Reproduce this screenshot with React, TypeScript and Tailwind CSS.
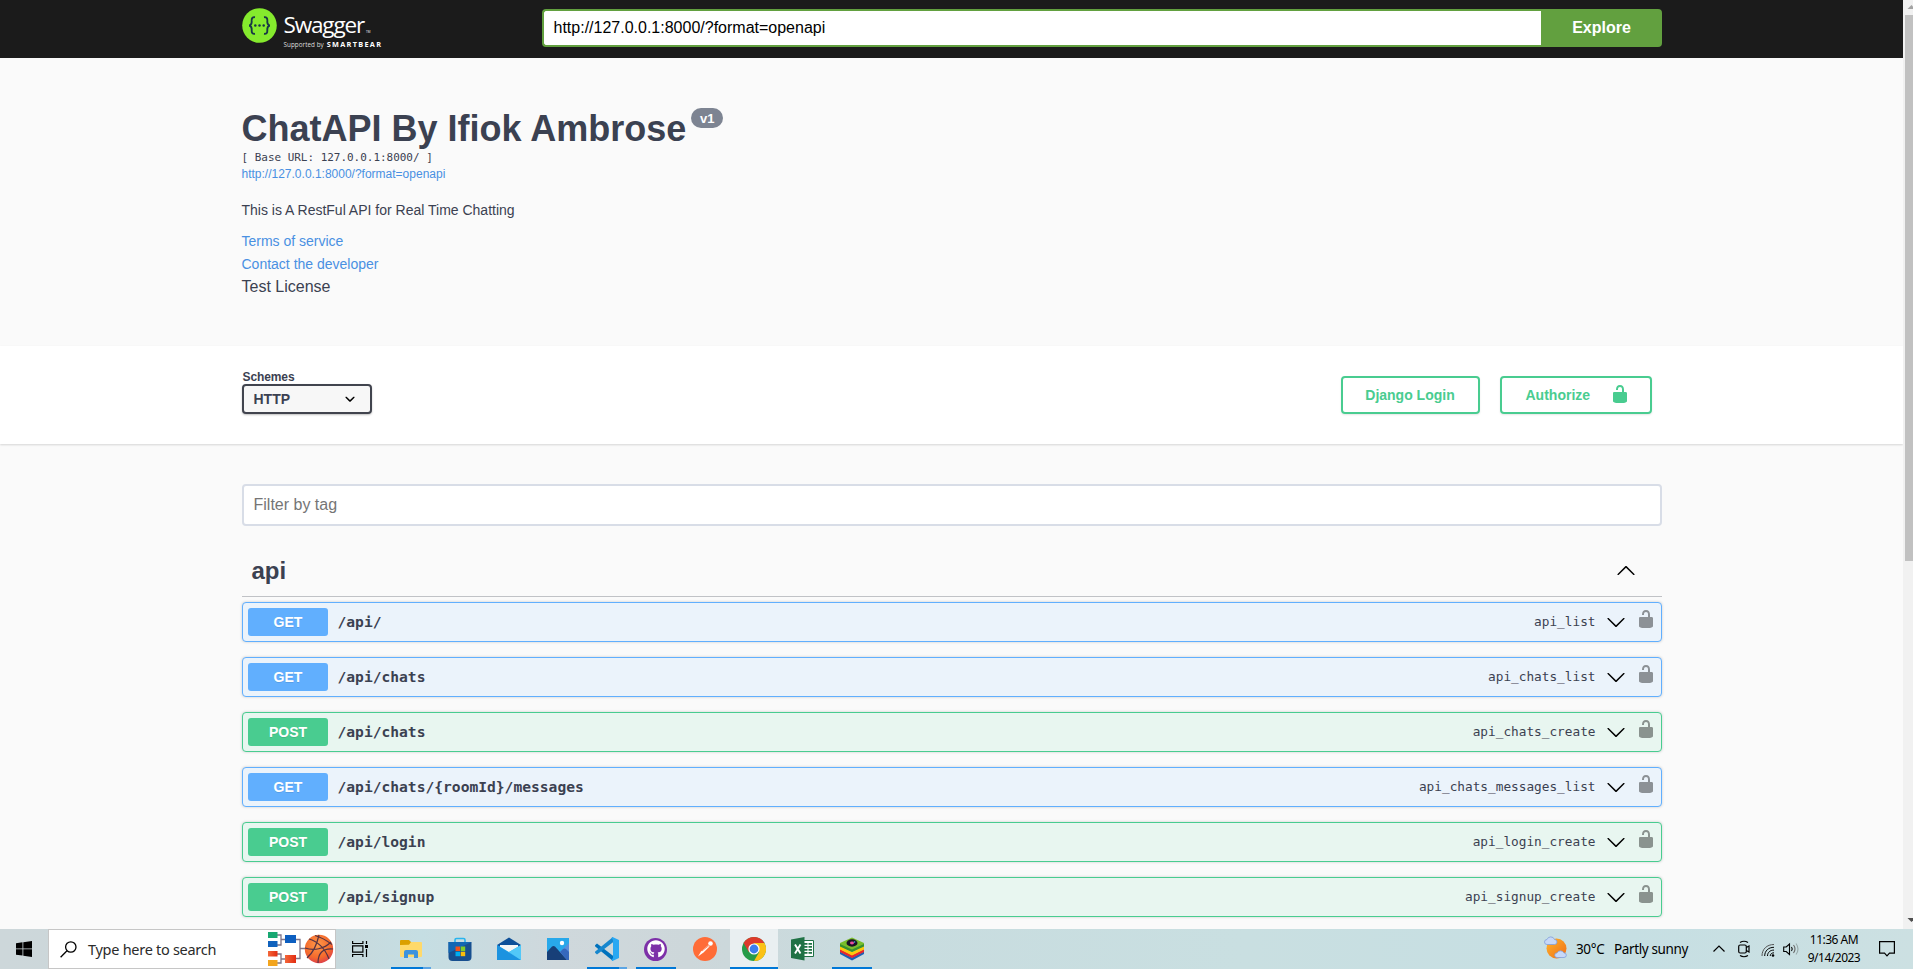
import React from "react";
import { FaGithub } from "react-icons/fa";

type Method = "GET" | "POST";
type Operation = { method: Method; path: string; id: string };

const operations: Operation[] = [
  { method: "GET", path: "/api/", id: "api_list" },
  { method: "GET", path: "/api/chats", id: "api_chats_list" },
  { method: "POST", path: "/api/chats", id: "api_chats_create" },
  { method: "GET", path: "/api/chats/{roomId}/messages", id: "api_chats_messages_list" },
  { method: "POST", path: "/api/login", id: "api_login_create" },
  { method: "POST", path: "/api/signup", id: "api_signup_create" },
];

function Wrapper({ children, className = "" }: { children: React.ReactNode; className?: string }) {
  return <div className={`mx-auto w-full max-w-[1460px] px-5 ${className}`}>{children}</div>;
}

function UnlockIcon({ className = "" }: { className?: string }) {
  return (
    <svg viewBox="0 0 20 20" className={`h-5 w-5 shrink-0 fill-current ${className}`}>
      <path d="M15.8 8H14V5.6C14 2.703 12.665 1 10 1 7.334 1 6 2.703 6 5.6V6h2v-.801C8 3.754 8.797 3 10 3c1.203 0 2 .754 2 2.199V8H4c-.553 0-1 .646-1 1.199V17c0 .549.428 1.139.951 1.307l1.197.387C5.672 18.861 6.55 19 7.1 19h5.8c.549 0 1.428-.139 1.951-.307l1.196-.387c.524-.167.953-.757.953-1.306V9.199C17 8.646 16.352 8 15.8 8z" />
    </svg>
  );
}

function ArrowDown() {
  return (
    <svg viewBox="0 0 20 20" className="h-5 w-5 shrink-0">
      <path d="M17.418 6.109c.272-.268.709-.268.979 0s.271.701 0 .969l-7.908 7.83c-.27.268-.707.268-.979 0l-7.908-7.83c-.27-.268-.27-.701 0-.969.271-.268.709-.268.979 0L10 13.25l7.418-7.141z" />
    </svg>
  );
}

function ArrowUp() {
  return (
    <svg viewBox="0 0 20 20" className="mb-[3px] h-5 w-5 shrink-0">
      <path d="M17.418 14.908c.272.268.709.268.979 0s.271-.701 0-.969l-7.908-7.831c-.27-.268-.707-.268-.979 0l-7.908 7.831c-.27.268-.27.701 0 .969.271.268.709.268.979 0L10 7.767l7.418 7.141z" />
    </svg>
  );
}

function SwaggerLogo() {
  return (
    <div className="flex w-[300px] items-start pt-2">
      <svg viewBox="0 0 35 35" className="h-[35px] w-[35px] shrink-0">
        <circle cx="17.5" cy="17.5" r="17.3" fill="#85ea2d" />
        <g fill="none" stroke="#173647" strokeWidth="1.9">
          <path d="M13 9.2c-2.6-.3-3.4.8-3.3 3.2.2 2.900-.2 4.600-2.500 5.100 2.300.5 2.700 2.200 2.500 5.100-.1 2.400.7 3.500 3.300 3.200" />
          <path d="M22 9.200c2.600-.3 3.400.8 3.300 3.200-.2 2.900.2 4.600 2.500 5.100-2.300.5-2.700 2.200-2.500 5.100.1 2.400-.7 3.500-3.300 3.200" />
        </g>
        <g fill="#173647">
          <circle cx="13.300" cy="17.500" r="1.250" />
          <circle cx="17.500" cy="17.500" r="1.250" />
          <circle cx="21.700" cy="17.500" r="1.250" />
        </g>
      </svg>
      <div className="ml-[7px] font-['Open_Sans',sans-serif] text-white">
        <div className="flex h-[30px] items-start pt-[3px]">
          <span className="text-[22.5px] leading-[28px] tracking-[-1.15px]">Swagger</span>
          <span className="mt-[19px] ml-[2px] text-[3px] leading-[4px]">TM</span>
        </div>
        <div className="flex items-baseline gap-[3px] leading-[12px]">
          <span className="text-[6.3px] tracking-[0.05px] text-[#dddddd]">Supported by</span>
          <span className="text-[7.3px] font-bold tracking-[1.3px]">SMARTBEAR</span>
        </div>
      </div>
    </div>
  );
}

function TopBar() {
  return (
    <header className="h-[58px] shrink-0 bg-[#1b1b1b]">
      <Wrapper className="flex">
        <SwaggerLogo />
        <div className="mt-[9px] flex h-[38px] flex-1">
          <div className="flex flex-1 items-center rounded-l border-2 border-r-0 border-[#62a03f] bg-white px-[10px] text-base text-black">
            http://127.0.0.1:8000/?format=openapi
          </div>
          <button className="w-[121px] rounded-r bg-[#62a03f] pl-px text-base font-bold text-white">Explore</button>
        </div>
      </Wrapper>
    </header>
  );
}

function Info() {
  return (
    <section className="h-[288px] shrink-0">
      <Wrapper className="pt-[50px]">
        <h2 className="flex items-start text-[36px] leading-[41px] font-bold">
          ChatAPI By Ifiok Ambrose
          <span className="ml-[5px] flex h-5 w-8 items-center justify-center rounded-full bg-[#7d8492] text-[13px] leading-none text-white">
            v1
          </span>
        </h2>
        <div className="pt-px font-['DejaVu_Sans_Mono',monospace] text-[10.96px] leading-[16px]">[ Base URL: 127.0.0.1:8000/ ]</div>
        <a className="block text-xs leading-[16px] text-[#4990e2]">http://127.0.0.1:8000/?format=openapi</a>
        <p className="mt-[18px] text-sm leading-[21px]">This is A RestFul API for Real Time Chatting</p>
        <a className="mt-[10px] block text-sm leading-[21px] text-[#4990e2]">Terms of service</a>
        <a className="mt-[2px] block text-sm leading-[21px] text-[#4990e2]">Contact the developer</a>
        <div className="mt-px text-base leading-[22px]">Test License</div>
      </Wrapper>
    </section>
  );
}

function Schemes() {
  return (
    <section className="h-[98px] shrink-0 bg-white shadow-[0_1px_2px_0_rgba(0,0,0,0.15)]">
      <Wrapper className="flex items-start justify-between pt-[24px]">
        <label className="text-xs leading-[14px] font-bold">
          <span className="block pl-px tracking-[-0.1px]">Schemes</span>
          <span className="flex h-[30px] w-[130px] items-center justify-between rounded border-2 border-[#41444e] bg-[#f7f7f7] pr-[10px] pl-[10px] text-sm leading-none shadow-[0_1px_2px_0_rgba(0,0,0,0.25)]">
            HTTP
            <svg viewBox="0 0 20 20" className="h-5 w-5">
              <path d="M13.418 7.859c.271-.268.709-.268.978 0 .27.268.272.701 0 .969l-3.908 3.83c-.27.268-.707.268-.979 0l-3.908-3.830c-.27-.267-.27-.701 0-.969.271-.268.709-.268.978 0L10 11l3.418-3.141z" />
            </svg>
          </span>
        </label>
        <div className="mt-[6px] mr-[10px] flex gap-5 text-sm font-bold text-[#49cc90]">
          <button className="flex h-[38px] w-[139px] items-center justify-center rounded border-2 border-[#49cc90] pb-px shadow-[0_1px_2px_rgba(0,0,0,0.1)]">
            Django Login
          </button>
          <button className="flex h-[38px] w-[152px] items-center justify-between rounded border-2 border-[#49cc90] pr-5 pl-6 shadow-[0_1px_2px_rgba(0,0,0,0.1)]">
            Authorize
            <UnlockIcon className="mb-[2px]" />
          </button>
        </div>
      </Wrapper>
    </section>
  );
}

function OperationRow({ method, path, id }: Operation) {
  const get = method === "GET";
  return (
    <div
      className={`flex h-10 items-center rounded border pr-[5px] pl-[5px] shadow-[0_0_3px_rgba(0,0,0,0.19)] ${
        get ? "border-[#61affe] bg-[#ebf3fb]" : "border-[#49cc90] bg-[#e8f6f0]"
      }`}
    >
      <span
        className={`flex h-7 w-20 items-center justify-center rounded-[3px] pl-px text-sm font-bold text-white [text-shadow:0_1px_0_rgba(0,0,0,0.1)] ${
          get ? "bg-[#61affe]" : "bg-[#49cc90]"
        }`}
      >
        {method}
      </span>
      <span className="ml-[10px] flex-1 font-['DejaVu_Sans_Mono',monospace] text-[14.62px] font-bold">{path}</span>
      <span className="font-['DejaVu_Sans_Mono',monospace] text-[12.75px]">{id}</span>
      <span className="mr-[10px] ml-[10px]">
        <ArrowDown />
      </span>
      <UnlockIcon className="mb-[6px] text-black opacity-40" />
    </div>
  );
}

function Operations() {
  return (
    <Wrapper className="pt-10">
      <div className="flex h-[42px] items-center rounded border-2 border-[#d8dde7] bg-white px-[10px] pb-px text-base text-[#757575]">
        Filter by tag
      </div>
      <div className="mt-5 flex h-[51px] items-center justify-between border-b border-[rgba(59,65,81,0.3)] pr-[26px] pl-[10px]">
        <h3 className="text-2xl leading-none font-bold">api</h3>
        <ArrowUp />
      </div>
      <div className="mt-[5px] flex flex-col gap-[15px]">
        {operations.map((op) => (
          <OperationRow key={op.id} {...op} />
        ))}
      </div>
    </Wrapper>
  );
}

function Scrollbar() {
  return (
    <div className="flex w-[10px] shrink-0 flex-col bg-[#f1f1f1] pl-[2px]">
      <svg viewBox="0 0 8 15" className="h-[15px] w-2">
        <path d="M2.500 9L6.500 5l4 4z" fill="#a3a3a3" />
      </svg>
      <div className="h-[546px] bg-[#c1c1c1]" />
      <svg viewBox="0 0 8 15" className="mt-auto h-[15px] w-2">
        <path d="M2.500 4l4 4 4-4z" fill="#505050" />
      </svg>
    </div>
  );
}

function BracketArt() {
  return (
    <svg viewBox="0 0 66 36" className="h-9 w-[66px]">
      <defs>
        <radialGradient id="ball" cx=".45" cy=".35" r=".7">
          <stop offset="0" stopColor="#ff9a4a" />
          <stop offset=".65" stopColor="#f4692c" />
          <stop offset="1" stopColor="#d93a50" />
        </radialGradient>
        <linearGradient id="redBox">
          <stop offset="0" stopColor="#f4683a" />
          <stop offset="1" stopColor="#e22c12" />
        </linearGradient>
      </defs>
      <g fill="none" stroke="#7f7488" strokeWidth="1.300">
        <path d="M9 4h4v10H9M13 8.500h5M9 23h4v9H9M13 28h5M28 8.500h4v19h-4M32 17.500h7" />
      </g>
      <rect x="0" y="1" width="9.500" height="6" fill="#18a872" />
      <rect x="0" y="10" width="9.500" height="6" fill="#1062bd" />
      <rect x="0" y="20" width="9.500" height="5.500" fill="url(#redBox)" />
      <rect x="0" y="29" width="9.500" height="6" fill="#f3a51e" />
      <rect x="17" y="4" width="11" height="8" fill="#0d5fc0" />
      <rect x="17" y="24" width="11" height="8" fill="url(#redBox)" />
      <circle cx="51" cy="18" r="14.200" fill="url(#ball)" />
      <g fill="none" stroke="#553243" strokeWidth="1.200">
        <path d="M37 17c9 3 19 1 26-6M41 8c8 2 16 9 20 20M51 4c-2 9-5 17-12 23M50 32c0-9 4-15 15-14M47 4.500c7 2 13 6 17 9" />
      </g>
    </svg>
  );
}

function ExplorerIcon() {
  return (
    <svg viewBox="0 0 22 18" className="h-[18px] w-[22px]">
      <path d="M0 1a1 1 0 0 1 1-1h8l2 2v4H0z" fill="#dba000" />
      <path d="M0 5l9-.2L11 2h10a1 1 0 0 1 1 1v13a1 1 0 0 1-1 1H1a1 1 0 0 1-1-1z" fill="#ffd96a" />
      <path d="M4 18v-6a2 2 0 0 1 2-2h10a2 2 0 0 1 2 2v6h-4v-3.500H8V18z" fill="#3d93dd" />
    </svg>
  );
}

function StoreIcon() {
  return (
    <svg viewBox="0 0 24 24" className="h-6 w-6">
      <path d="M7 6V3a1.500 1.500 0 0 1 1.500-1.500h7A1.500 1.500 0 0 1 17 3v3" fill="none" stroke="#28b4ee" strokeWidth="1.600" />
      <path d="M.5 5h23v15a4 4 0 0 1-4 4h-15a4 4 0 0 1-4-4z" fill="#174f8f" />
      <path d="M.5 5h23L.5 16z" fill="#1267b3" />
      <path d="M7.500 9.500H12V14H7.500z" fill="#f1511b" />
      <path d="M12.700 9.500h4.500V14h-4.500z" fill="#80cc28" />
      <path d="M7.500 14.700H12v4.500H7.500z" fill="#00adef" />
      <path d="M12.700 14.700h4.500v4.500h-4.500z" fill="#fbbc09" />
    </svg>
  );
}

function MailIcon() {
  return (
    <svg viewBox="0 0 24 24" className="h-6 w-6">
      <path d="M0 8l12-7.500L24 8v4H0z" fill="#0e4f98" />
      <path d="M3 8h18v7H3z" fill="#f5f5f5" />
      <path d="M0 8l12 7 12-7v15H0z" fill="#37b6f1" />
      <path d="M0 8l24 15H0z" fill="#1c93e0" />
      <path d="M12 15L24 8v15z" fill="#52c8f8" />
    </svg>
  );
}

function PhotosIcon() {
  return (
    <svg viewBox="0 0 22 22" className="h-[22px] w-[22px]">
      <path d="M0 0h22v22H0z" fill="#28a8ea" />
      <path d="M22 5L12 15l6 7h4z" fill="#5b8fdc" />
      <path d="M0 14l5-5.500q1.500-1 3 0L20 22H0z" fill="#173f78" />
      <path d="M13 14l3-3q1.500-1 3 0l3 3v8h-2z" fill="#3668bd" />
      <circle cx="15" cy="5" r="2.200" fill="#fff" />
    </svg>
  );
}

function CodeIcon() {
  return (
    <svg viewBox="0 0 24 24" className="h-6 w-6">
      <path d="M0 8.200l2-1.700 16 12.300V24L.2 9.500z" fill="#0072bd" />
      <path d="M0 15.800l2 1.700L18 5.200V0L.2 14.500z" fill="#1787ce" />
      <path d="M17.500 0L24 3v18l-6.500 3-1-1 1.500-2V3l-1.500-2z" fill="#2aa8f2" />
    </svg>
  );
}

function DesktopGitIcon() {
  return (
    <span className="mr-px flex h-[23px] w-[23px] items-center justify-center rounded-full bg-[#7d30a8]">
      <FaGithub className="h-[18px] w-[18px] text-white" />
    </span>
  );
}

function PostmanIcon() {
  return (
    <svg viewBox="0 0 24 24" className="h-6 w-6">
      <circle cx="12" cy="12" r="12" fill="#ff6c37" />
      <circle cx="17.500" cy="6.500" r="2.300" fill="#fff" />
      <path d="M15.500 8L8 14.500l-3 5 5.500-4 6-6z" fill="#fff" />
      <path d="M9 14l7-5.500" stroke="#ff6c37" strokeWidth=".7" />
    </svg>
  );
}

function ChromeIcon() {
  return (
    <svg viewBox="0 0 24 24" className="h-6 w-6">
      <circle cx="12" cy="12" r="12" fill="#269b48" />
      <path d="M1.600 6A12 12 0 0 1 22.400 6H12L6.800 15z" fill="#dd3a2b" />
      <path d="M12 6h10.400A12 12 0 0 1 12 24l5.200-9z" fill="#fbc116" />
      <circle cx="12" cy="12" r="5.600" fill="#fff" />
      <circle cx="12" cy="12" r="4.400" fill="#3b7ded" />
    </svg>
  );
}

function ExcelIcon() {
  return (
    <svg viewBox="0 0 24 24" className="h-6 w-6">
      <path d="M12 3.500h10.500v16H12z" fill="#fff" stroke="#207245" strokeWidth="1" />
      <path d="M13 6h3.500v1.800H13zM17.500 6H21v1.800h-3.500zM13 9h3.500v1.800H13zM17.500 9H21v1.800h-3.500zM13 12h3.500v1.800H13zM17.500 12H21v1.800h-3.500zM13 15h3.500v1.800H13zM17.500 15H21v1.800h-3.500z" fill="#207245" />
      <path d="M0 2.500L13.500 0v23.500L0 21z" fill="#207245" />
      <path d="M4 7.500l5.500 9M9.500 7.500l-5.500 9" stroke="#fff" strokeWidth="1.900" />
    </svg>
  );
}

function StacksIcon() {
  return (
    <svg viewBox="0 0 24 24" className="mb-px h-6 w-6">
      <path d="M0 14.500l12 6 12-6v2.500l-12 6.500L0 17z" fill="#1e5fb4" />
      <path d="M0 12l12 6 12-6v3l-12 6L0 15z" fill="#e8262c" />
      <path d="M0 9l12 6 12-6v3.500l-12 6-12-6z" fill="#fdc80c" />
      <path d="M0 6L12 .5 24 6v3l-12 6L0 9z" fill="#78be2c" />
      <path d="M0 7l12 5.500L24 7v2.500L12 15 0 9.500z" fill="#37922e" />
      <ellipse cx="12" cy="6" rx="5.500" ry="3.700" fill="#191325" />
      <ellipse cx="12" cy="6" rx="2" ry="1.400" fill="#e94d9d" />
      <circle cx="14.500" cy="5" r=".8" fill="#3eb6e9" />
    </svg>
  );
}

function Slot({ children, state = "idle" }: { children: React.ReactNode; state?: "idle" | "open" | "multi" | "active" }) {
  return (
    <div className={`relative flex h-10 w-12 shrink-0 items-center justify-center ${state === "active" ? "bg-[#e9eff1]" : ""}`}>
      {children}
      {state === "active" && <i className="absolute inset-x-0 bottom-0 h-[2px] bg-[#0078d7]" />}
      {state === "open" && <i className="absolute inset-x-1 bottom-0 h-[2px] bg-[#0078d7]" />}
      {state === "multi" && (
        <i className="absolute inset-x-1 bottom-0 h-[2px] border-r-8 border-[#5ba5e4] bg-[#0078d7]" />
      )}
    </div>
  );
}

function Tray() {
  return (
    <div className="ml-auto flex items-center text-black">
      <svg viewBox="0 0 24 24" className="mb-[2px] h-6 w-6">
        <defs>
          <linearGradient id="sun" x2="1" y2="1">
            <stop offset="0" stopColor="#ffb52b" />
            <stop offset="1" stopColor="#ef6c17" />
          </linearGradient>
        </defs>
        <circle cx="12.500" cy="12.500" r="10" fill="url(#sun)" />
        <g fill="#c7d8f8" stroke="#819edb" strokeWidth=".8">
          <path d="M3 8.500a2.500 2.500 0 0 1 0-5 4 4 0 0 1 7.500 0 2.500 2.500 0 0 1 0 5z" />
          <path d="M13 21.500a2.300 2.300 0 0 1 0-4.600 4 4 0 0 1 7 0 2.300 2.300 0 0 1 0 4.600z" />
        </g>
      </svg>
      <span className="ml-[8px] w-[38px] text-[13.500px] tracking-[-0.35px]">30°C</span>
      <span className="w-[99px] text-[13.500px] tracking-[-0.38px] whitespace-nowrap">Partly sunny</span>
      <svg viewBox="0 0 12 8" className="h-2 w-3" fill="none" stroke="#000" strokeWidth="1.200">
        <path d="M.5 6.500L6 1l5.500 5.500" />
      </svg>
      <svg viewBox="0 0 12 18" className="ml-[13px] h-[18px] w-3" fill="none" stroke="#000" strokeWidth="1.200">
        <path d="M2 2.500Q6 0 10 2.500M2 15.500Q6 18 10 15.500" />
        <rect x=".7" y="5" width="7.600" height="8" rx="1.500" />
        <path d="M8.300 7.500l2.700-1.500v6l-2.700-1.500" />
      </svg>
      <svg viewBox="0 0 14 14" className="mt-[2px] ml-[11px] h-[14px] w-[14px]" fill="none" stroke="#000" strokeWidth="1">
        <path d="M1 13C1 6 6 1.500 13 1.500" stroke="#555" />
        <path d="M3.700 13C3.700 7.800 7.500 4.300 13 4.300M6.500 13C6.500 9.500 9 7.100 13 7.100M9.200 13c0-1.900 1.600-3.200 3.800-3.200" />
        <circle cx="12" cy="12.500" r="1.300" fill="#000" stroke="none" />
      </svg>
      <svg viewBox="0 0 17 14" className="ml-[8px] h-[14px] w-[17px]" fill="none" stroke="#000" strokeWidth="1.100">
        <path d="M.7 5v4.500h2.500l3.300 3V2L3.200 5z" />
        <path d="M8.500 5q1.500 2 0 4" />
        <path d="M10.500 3q3 4 0 8" stroke="#666" />
        <path d="M13 1.500q4 5.500 0 11" stroke="#9aa" />
      </svg>
      <div className="ml-[7px] flex w-[54px] flex-col items-center text-[12px] leading-[18px] tracking-[-0.5px] whitespace-nowrap">
        <span>11:36 AM</span>
        <span>9/14/2023</span>
      </div>
      <svg viewBox="0 0 16 16" className="mr-[18px] ml-[18px] h-4 w-4" fill="none" stroke="#000" strokeWidth="1.200">
        <path d="M.6.6h14.800v11.600H10.500L8 14.800l-2.500-2.600H.6z" />
      </svg>
    </div>
  );
}

function Taskbar() {
  return (
    <footer className="flex h-10 shrink-0 items-center bg-[linear-gradient(90deg,#cdd7da_0%,#c9d7da_16%,#c5dee3_22%,#cfd8dc_29%,#cdd7da_36%,#c8dcdf_46%,#c9dfe1_65%,#c6dfe3_85%,#cce0e2_100%)] font-['Noto_Sans','Open_Sans',sans-serif]">
      <div className="flex w-12 justify-center">
        <svg viewBox="0 0 16 16" className="h-4 w-4">
          <path d="M0 2.200L6.500 1.300v6.200H0zM7.300 1.200L16 0v7.500H7.300zM0 8.300h6.500v6.300L0 13.700zM7.300 8.300H16V16l-8.700-1.300z" />
        </svg>
      </div>
      <div className="flex h-10 w-72 items-center border border-[#c6c6c6] bg-white pl-[11px]">
        <svg viewBox="0 0 17 17" className="h-[17px] w-[17px]" fill="none" stroke="#000" strokeWidth="1.300">
          <circle cx="10.800" cy="6" r="5.200" />
          <path d="M7 9.800L.6 16.200" />
        </svg>
        <span className="ml-[11px] flex-1 pt-px text-[14.500px] tracking-[-0.28px] whitespace-nowrap text-[#2b2b2b]">
          Type here to search
        </span>
        <div className="mr-px">
          <BracketArt />
        </div>
      </div>
      <div className="mr-[3px]">
        <Slot>
          <svg viewBox="0 0 16 16" className="h-4 w-4" fill="none" stroke="#000" strokeWidth="1.200">
            <path d="M.6 0v2.500h10.300V0M.6 16v-2.500h10.300V16M.6 4.800h10.300v6.400H.6zM14.500 0v3M14.500 8v8" />
            <path d="M13 4h3v3h-3z" fill="#000" stroke="none" />
          </svg>
        </Slot>
      </div>
      <div className="flex gap-px">
        <Slot state="multi"><ExplorerIcon /></Slot>
        <Slot><StoreIcon /></Slot>
        <Slot><MailIcon /></Slot>
        <Slot><PhotosIcon /></Slot>
        <Slot state="multi"><CodeIcon /></Slot>
        <Slot state="open"><DesktopGitIcon /></Slot>
        <Slot><PostmanIcon /></Slot>
        <Slot state="active"><ChromeIcon /></Slot>
        <Slot><ExcelIcon /></Slot>
        <Slot state="open"><StacksIcon /></Slot>
      </div>
      <Tray />
    </footer>
  );
}

export default function App() {
  return (
    <div className="flex h-screen flex-col overflow-hidden bg-[#fafafa] font-['Liberation_Sans',sans-serif] text-[#3b4151]">
      <div className="flex min-h-0 flex-1">
        <main className="flex min-w-0 flex-1 flex-col overflow-hidden">
          <TopBar />
          <Info />
          <Schemes />
          <Operations />
        </main>
        <Scrollbar />
      </div>
      <Taskbar />
    </div>
  );
}
